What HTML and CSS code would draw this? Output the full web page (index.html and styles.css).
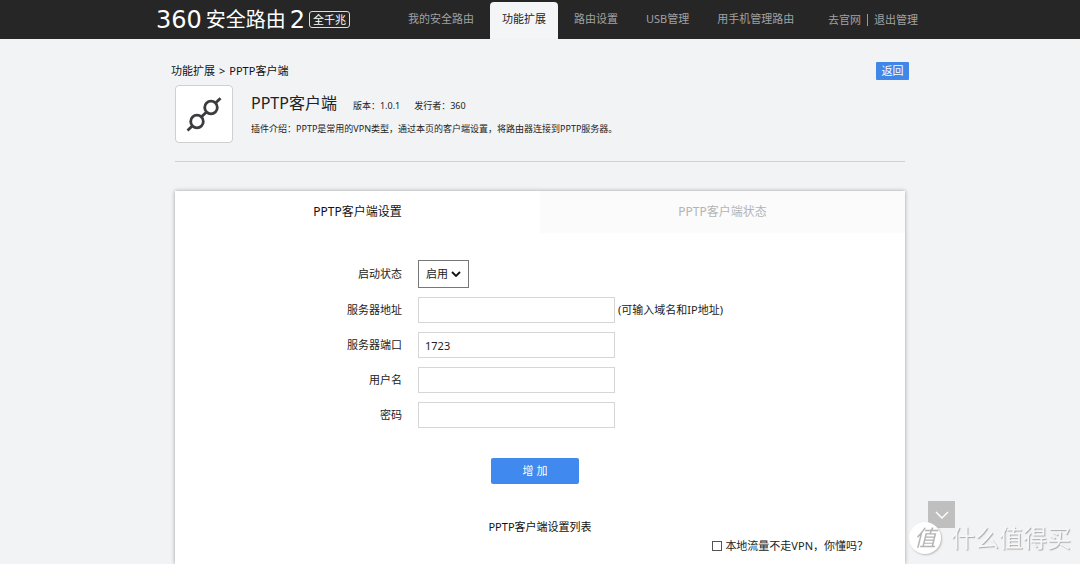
FILE: index.html
```html
<!DOCTYPE html>
<html lang="zh-CN">
<head>
<meta charset="utf-8">
<meta name="viewport" content="width=device-width, initial-scale=1">
<title>PPTP客户端</title>
<link rel="stylesheet" href="styles.css">
</head>
<body>
<header class="topbar">
  <div class="topbar-inner">
    <div class="logo">
      <span class="logo-latin">360</span><span class="logo-name">安全路由</span><span class="logo-latin">2</span>
      <span class="logo-badge">全千兆</span>
    </div>
    <nav class="nav">
      <a class="nav-item" href="#">我的安全路由</a>
      <a class="nav-item active" href="#">功能扩展</a>
      <a class="nav-item" href="#">路由设置</a>
      <a class="nav-item" href="#">USB管理</a>
      <a class="nav-item" href="#">用手机管理路由</a>
    </nav>
    <div class="account">
      <a href="#">去官网</a>
      <a class="logout" href="#">退出管理</a>
    </div>
  </div>
</header>

<main class="page">
  <div class="crumbs">
    <div class="crumb-path"><a href="#">功能扩展</a><span>&gt;</span><span>PPTP客户端</span></div>
    <button class="back" type="button">返回</button>
  </div>

  <section class="plugin">
    <div class="plugin-icon">
      <svg width="36" height="36" viewBox="0 0 36 36" fill="none" stroke="#3c3c3e" stroke-width="2.8" aria-hidden="true">
        <path d="M1.500 34.500 L6.500 29.800M15.200 21 L20.800 15.800M29.500 7 L34.500 2.200"/>
        <circle cx="11" cy="25.500" r="6.300"/>
        <circle cx="25" cy="11.500" r="6.300"/>
      </svg>
    </div>
    <div class="plugin-info">
      <div class="plugin-head">
        <h1>PPTP客户端</h1>
        <span>版本：1.0.1</span>
        <span>发行者：360</span>
      </div>
      <p>插件介绍：PPTP是常用的VPN类型，通过本页的客户端设置，将路由器连接到PPTP服务器。</p>
    </div>
  </section>

  <section class="panel">
    <div class="tabs" role="tablist">
      <button class="tab selected" type="button" role="tab" aria-selected="true">PPTP客户端设置</button>
      <button class="tab" type="button" role="tab" aria-selected="false">PPTP客户端状态</button>
    </div>
    <form class="form">
      <label for="state">启动状态</label>
      <div class="field">
        <div class="select-box">
          <select id="state"><option>启用</option><option>禁用</option></select>
          <svg class="chevron" width="10" height="6" viewBox="0 0 10 6" fill="none" stroke="#111" stroke-width="1.8" aria-hidden="true"><path d="M1 1l4 4 4-4"/></svg>
        </div>
      </div>
      <label for="server">服务器地址</label>
      <div class="field"><input id="server" type="text"><span class="hint">(可输入域名和IP地址)</span></div>
      <label for="port">服务器端口</label>
      <div class="field"><input id="port" type="text" value="1723"></div>
      <label for="user">用户名</label>
      <div class="field"><input id="user" type="text"></div>
      <label for="pass">密码</label>
      <div class="field"><input id="pass" type="password"></div>
    </form>
    <button class="add" type="button">增 加</button>
    <h2>PPTP客户端设置列表</h2>
    <div class="local">
      <input id="local" type="checkbox"><label for="local">本地流量不走VPN，你懂吗？</label>
    </div>
  </section>
</main>

<button class="scroll-down" type="button" aria-label="向下">
  <svg width="14" height="8" viewBox="0 0 14 8" fill="none" stroke="#fff" stroke-width="1.4" aria-hidden="true"><path d="M1 1l6 6 6-6"/></svg>
</button>
<div class="watermark"><span class="mark-disc">值</span><span>什么值得买</span></div>
</body>
</html>
```
FILE: styles.css
```css
* {
  box-sizing: border-box;
}

body {
  margin: 0;
  height: 100vh;
  overflow: hidden;
  display: flex;
  flex-direction: column;
  background: #f2f3f5;
  color: #222;
  font: 11px/16px "Noto Sans", "Noto Sans CJK SC", sans-serif;
}

a {
  color: inherit;
  text-decoration: none;
}

button,
input,
select {
  font: inherit;
  color: inherit;
  border-radius: 0;
}

h1,
h2,
p {
  margin: 0;
  font-weight: 400;
}

.topbar {
  background: #262626;
}

.topbar-inner {
  max-width: 768px;
  height: 39px;
  margin: 0 auto;
  padding-right: 6px;
  display: flex;
  color: #a2a2a2;
}

.logo {
  width: 240px;
  display: flex;
  align-items: center;
  gap: 4px;
  color: #fff;
  white-space: nowrap;
}

.logo-latin {
  font: 400 24px/36px "DejaVu Sans", sans-serif;
}

.logo-name {
  font-size: 20px;
  line-height: 36px;
}

.logo-badge {
  padding: 0 3px;
  border: 1px solid #ddd;
  border-radius: 3px;
  line-height: 15px;
}

.nav {
  display: flex;
  gap: 4px;
}

.nav-item {
  margin-top: 2px;
  padding: 0 12px;
  line-height: 34px;
  border-radius: 4px 4px 0 0;
}

.nav-item.active {
  background: #f4f5f7;
  color: #222;
}

.account {
  margin-left: auto;
  display: flex;
  align-items: center;
  gap: 6px;
}

.logout {
  padding-left: 6px;
  border-left: 1px solid #999;
  line-height: 12px;
}

.page {
  width: 100%;
  max-width: 730px;
  margin: 0 auto;
  flex: 1;
  display: flex;
  flex-direction: column;
}

.crumbs {
  margin: 23px -4px 0 -4px;
  display: flex;
  justify-content: space-between;
  align-items: center;
  color: #111;
}

.crumb-path {
  display: flex;
  gap: 4px;
}

.back {
  width: 33px;
  height: 18px;
  padding: 0;
  border: 0;
  border-radius: 1px;
  background: #4087e8;
  color: #fff;
  line-height: 18px;
}

.plugin {
  margin-top: 5px;
  padding-bottom: 18px;
  display: flex;
  gap: 18px;
  border-bottom: 1px solid #cfd1d4;
}

.plugin-icon {
  width: 58px;
  height: 58px;
  display: grid;
  place-items: center;
  background: #fff;
  border: 1px solid #cfcfd1;
  border-radius: 4px;
}

.plugin-info {
  padding-top: 6px;
  font-size: 9px;
}

.plugin-head {
  display: flex;
  align-items: baseline;
  gap: 14px;
}

.plugin-head h1 {
  margin-right: 2px;
  font-size: 16px;
  line-height: 24px;
}

.plugin-info p {
  margin-top: 6px;
}

.panel {
  margin-top: 29px;
  flex: 1;
  background: #fff;
  box-shadow: 0 0 4px rgba(0, 0, 0, 0.35);
}

.tabs {
  display: flex;
}

.tab {
  flex: 1;
  height: 42px;
  padding: 0;
  border: 0;
  background: #fbfbfb;
  color: #b4b4b4;
  font-size: 12px;
}

.tab.selected {
  background: #fff;
  color: #111;
}

.form {
  margin-top: 27px;
  display: grid;
  grid-template-columns: 227px 1fr;
  gap: 9px 16px;
  align-items: center;
}

.form label {
  text-align: right;
}

.field {
  display: flex;
  align-items: center;
  gap: 3px;
}

.field input {
  width: 197px;
  height: 26px;
  padding: 0 6px;
  border: 1px solid #d6d6d6;
  background: #fff;
}

.select-box {
  position: relative;
}

.select-box select {
  display: block;
  width: 51px;
  height: 28px;
  padding: 0 7px;
  appearance: none;
  background: #fff;
  border: 1px solid #777;
}

.chevron {
  position: absolute;
  right: 8px;
  top: 11px;
  pointer-events: none;
}

.add {
  display: block;
  width: 88px;
  height: 26px;
  margin: 30px 0 0 316px;
  padding: 0;
  border: 0;
  border-radius: 2px;
  background: #4089ee;
  color: #fff;
}

.panel h2 {
  margin-top: 35px;
  color: #111;
  font-size: 11px;
  line-height: 16px;
  text-align: center;
}

.local {
  margin: 3px 37px 0 0;
  display: flex;
  justify-content: flex-end;
  align-items: center;
  gap: 3px;
}

.local input {
  appearance: none;
  width: 10px;
  height: 10px;
  margin: 0;
  border: 1px solid #555;
  background: #fff;
}

.scroll-down {
  position: fixed;
  right: 125px;
  bottom: 36px;
  width: 27px;
  height: 27px;
  padding: 0;
  display: grid;
  place-items: center;
  border: 0;
  background: #bfbfbf;
}

.watermark {
  position: fixed;
  right: 9px;
  bottom: 9px;
  display: flex;
  align-items: center;
  gap: 10px;
  color: #f7f7f8;
  font-size: 24px;
  line-height: 34px;
  text-shadow: 1px 1px 1px #aaa;
}

.mark-disc {
  width: 32px;
  height: 32px;
  border-radius: 50%;
  background: #fff;
  box-shadow: 1px 1px 2px #bbb;
  color: #b5b5b5;
  font-size: 22px;
  font-style: italic;
  line-height: 31px;
  text-align: center;
  text-shadow: none;
}
```
